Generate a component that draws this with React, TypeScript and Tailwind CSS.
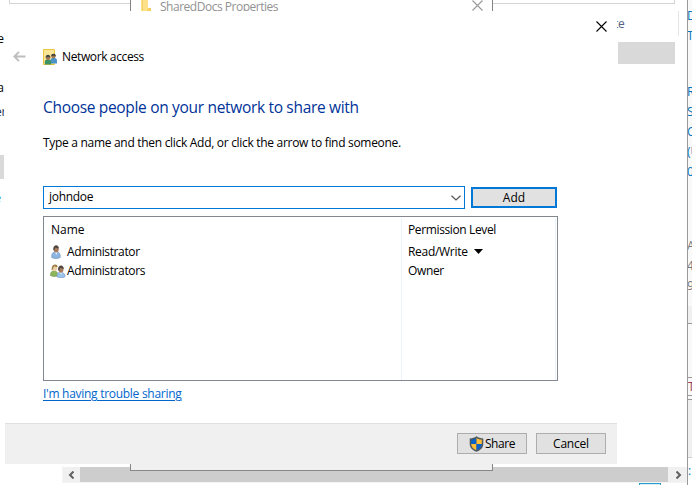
import React from "react";

function Arrow() {
  return (
    <svg width="13" height="11" viewBox="0 0 13 11" fill="none" stroke="#bdbdbd" strokeWidth="1.9">
      <path d="M12.5 5.500H1.500M6 .8L1.300 5.500 6 10.200" />
    </svg>
  );
}

function Cross({ color }: { color: string }) {
  return (
    <svg width="11" height="11" viewBox="0 0 11 11" fill="none" stroke={color} strokeWidth="1.1">
      <path d="M.5.5l10 10M10.5.5l-10 10" />
    </svg>
  );
}

function NetworkIcon() {
  return (
    <svg width="15" height="16" viewBox="0 0 15 16">
      <path d="M.5.5h11v15H.5z" fill="#fbe596" stroke="#e9c63e" />
      <path d="M7.500 14.500v-3c0-2 1-2.500 3-2.500s3.500.5 3.500 2.500v3z" fill="#4c93c9" />
      <circle cx="10.500" cy="7.300" r="2.100" fill="#9b7453" />
      <path d="M8.100 7.300c0-3.300 4.800-3.300 4.800 0-1.500-1-3-1-4.800 0z" fill="#3a3a38" />
      <path d="M1.800 15.500v-2.500c0-2 1-2.600 3-2.600s3.500.6 3.500 2.600v2.500z" fill="#3c9165" />
      <circle cx="5" cy="8.700" r="2.200" fill="#9b7453" />
      <path d="M2.500 8.700c0-4 5-4 5 0-1.500-1.200-3-1.200-5 0z" fill="#3d4542" />
    </svg>
  );
}

function UserIcon() {
  return (
    <svg width="10" height="14" viewBox="0 0 10 14">
      <path d="M.7 12.500C.3 9 1.500 7.500 3.500 7h3c2 .5 3 2 2.700 5.500-2 1.300-6.500 1.300-8.500 0z" fill="#8db5df" stroke="#6d95c2" strokeWidth=".6" />
      <path d="M4 7l1.300 3L6.500 7z" fill="#eef5fc" />
      <ellipse cx="5.200" cy="4.300" rx="2.500" ry="3.200" fill="#a87b5e" />
      <path d="M2.400 5C1.300-1 8.300-1.200 7.700 3.600 6 3 5 2.700 4.200 2.700L3.400 5.500z" fill="#51473f" />
    </svg>
  );
}

function GroupIcon() {
  return (
    <svg width="16" height="14" viewBox="0 0 16 14">
      <path d="M.5 11.500C.3 8.500 1.500 7 4 7s4 1.500 4 4.500c-2 1.200-5.500 1.200-7.500 0z" fill="#8eb45c" stroke="#65943d" strokeWidth=".6" />
      <ellipse cx="4.700" cy="4.300" rx="2.500" ry="3" fill="#ecd0a8" />
      <path d="M1.800 6.500C.3-.8 8-1 7.600 3 6 3 5 2.200 4.200 2.200 3 3 3.500 5.500 1.800 6.500z" fill="#9a7d40" />
      <path d="M7 12.800C6.800 9.700 8 8.200 10.500 8.200s4.800 1.500 4.500 4.600c-2 1.200-6 1.200-8 0z" fill="#9bc2e8" stroke="#6d95c2" strokeWidth=".6" />
      <path d="M10 8.200l1 2.500 1-2.500z" fill="#f4f9fd" />
      <ellipse cx="11" cy="5.500" rx="2.500" ry="3.100" fill="#a87b5e" />
      <path d="M8.200 6.200C7.200.2 14.300.1 13.700 5 12 4.300 11 3.900 10.200 3.900L9.200 6.700z" fill="#51473f" />
    </svg>
  );
}

function Shield() {
  return (
    <svg width="15" height="16" viewBox="0 0 15 16">
      <path d="M7.500.3C5.500 1.800 3.500 2.300.7 2.400v5.600c0 3.700 2.700 6.200 6.800 7.800 4.100-1.600 6.800-4.100 6.800-7.800V2.400C11.500 2.300 9.500 1.800 7.500.3z" fill="#505960" />
      <path d="M7.500 1.900C5.800 3 4.200 3.500 2.200 3.700V8h5.300z" fill="#0862c8" />
      <path d="M7.500 1.900c1.700 1.100 3.300 1.600 5.300 1.800V8H7.500z" fill="#ffbe35" />
      <path d="M2.200 8c0 2.900 2 4.900 5.300 6.300V8z" fill="#ffbe35" />
      <path d="M12.800 8c0 2.900-2 4.900-5.300 6.300V8z" fill="#0862c8" />
    </svg>
  );
}

function SideLine({ children }: { children: string }) {
  return <div className="-ml-[1px] h-5 whitespace-nowrap">{children}</div>;
}

function Backdrop() {
  return (
    <>
      <div className="absolute left-[9px] top-0 h-1 w-[666px] border-x border-b border-[#d4d4d4]" />
      <div className="absolute left-[130px] top-0 flex h-[471px] w-[363px] items-start border-x border-b border-[#848484] bg-white">
        <svg className="ml-[10px] shrink-0" width="10" height="11" viewBox="0 0 10 11">
          <path d="M0 0h7v11H0z" fill="#ffe18a" />
          <path d="M1 0h1v11H1z" fill="#f4cf6c" />
          <path d="M7 8h3v3H6z" fill="#f7ce62" />
        </svg>
        <span className="ml-[9px] h-4 flex-1 text-[12px] leading-[14px] tracking-[-0.48px] text-[#929292]">SharedDocs Properties</span>
        <span className="mr-[9px]"><Cross color="#999" /></span>
      </div>

      <div className="absolute left-0 top-[31px] h-[185px] w-[4px] overflow-hidden">
        <div className="flex h-[18px] justify-end">e</div>
        <div className="mt-[31px] flex h-[18px] justify-end">a</div>
        <div className="mt-[6px] flex h-[18px] justify-end text-[#152f51]"><span className="-mr-[2px] tracking-[-0.3px]">er</span></div>
        <div className="mt-[33px] h-6 bg-[#d9d9d9]" />
        <div className="mt-[11px] flex h-[18px] justify-end pr-[3px] text-[#0066b4]">e</div>
      </div>

      <div className="absolute left-[617px] top-[11px] h-[54px] w-[62px]">
        <div className="flex h-[25px] w-[62px] items-center overflow-hidden border-r border-[#e5e5e5] text-[#526280]">
          <span className="-ml-[3px] tracking-[-0.2px]">te</span>
        </div>
        <div className="mt-[6px] ml-[1px] h-[22px] w-[57px] bg-[#d9d9d9]" />
      </div>

      <div className="absolute left-[62px] top-[466px] flex h-[17px] w-[625px] border-b border-l border-[#f4f4f4] pt-[1px]">
        <div className="flex w-[17px] items-center justify-center bg-[#f0f0f0] pr-[2px]">
          <svg width="6" height="8" viewBox="0 0 6 8" fill="none" stroke="#606060" strokeWidth="2"><path d="M5.500.5L2 4l3.500 3.500" /></svg>
        </div>
        <div className="w-[588px] bg-[#cdcdcd]" />
        <div className="flex flex-1 items-center justify-center bg-[#f0f0f0] pl-[3px]">
          <svg width="6" height="8" viewBox="0 0 6 8" fill="none" stroke="#606060" strokeWidth="2"><path d="M.5.5L4 4 .5 7.500" /></svg>
        </div>
      </div>
      <div className="absolute left-[130px] top-[464px] h-[7px] w-[363px] border-x border-b border-[#888] bg-[#f0f0f0]" />
      <div className="absolute left-[639px] top-[483px] h-1 w-[22px] border border-[#2b9ed0] bg-[#ddedf5]" />

      <aside className="absolute left-[687px] top-0 flex h-[485px] w-[5px] flex-col overflow-hidden border-l border-[#999] bg-[#f9f9f9] text-[12px] leading-5 text-[#0875bd]">
        <div className="-mt-[14px]">
          <SideLine>P</SideLine>
          <SideLine>D</SideLine>
          <SideLine>T</SideLine>
        </div>
        <div className="mt-[36px]">
          <SideLine>R</SideLine>
          <SideLine>S</SideLine>
          <SideLine>C</SideLine>
          <SideLine>(U</SideLine>
          <SideLine>0</SideLine>
        </div>
        <div className="mt-[54px] text-[#777]">
          <SideLine>A</SideLine>
          <SideLine>4</SideLine>
          <SideLine>9</SideLine>
        </div>
        <div className="mt-[10px] h-[17px] shrink-0 bg-[#f0f0f0]" />
        <div className="h-[55px] shrink-0 border-y border-[#999]" />
        <div className="mt-[1px] h-[17px] shrink-0 border-b border-[#999] leading-4 text-[#963f52]">T</div>
        <div className="mt-[3px] h-[59px] shrink-0 border-y border-t-[#999] border-b-[#ccc] bg-[#f0f0f0]" />
        <div className="flex-1 bg-white pt-[3px]">:</div>
      </aside>
    </>
  );
}

function Dialog() {
  return (
    <main className="absolute left-[5px] top-[11px] flex h-[453px] w-[612px] flex-col bg-white">
      <div className="flex h-[30px] shrink-0 items-center justify-end pr-[10px]"><Cross color="#000" /></div>
      <header className="flex h-8 shrink-0 items-center pl-2">
        <span className="-mt-[2px]"><Arrow /></span>
        <span className="ml-[17px] -mt-[1px]"><NetworkIcon /></span>
        <span className="ml-1 tracking-[-0.38px]">Network access</span>
      </header>
      <section className="ml-[38px] flex w-[515px] flex-col">
        <h1 className="mt-[19px] h-[30px] text-[15.5px] leading-[30px] tracking-[-0.32px] whitespace-nowrap text-[#003399]">Choose people on your network to share with</h1>
        <p className="mt-[11px] h-5 leading-5 tracking-[-0.3px] whitespace-nowrap">Type a name and then click Add, or click the arrow to find someone.</p>
        <div className="mt-[33px] flex h-[23px] items-center">
          <div className="flex h-[23px] w-[422px] items-center justify-between border border-[#0078d7] pr-[3px] pl-[5px]">
            <span className="-mt-[1px] tracking-[-0.3px]">johndoe</span>
            <svg width="10" height="6" viewBox="0 0 10 6" fill="none" stroke="#555" strokeWidth="1.2"><path d="M.5.7L5 5 9.500.7" /></svg>
          </div>
          <button className="ml-[6px] flex h-[21px] w-[86px] items-center justify-center border-2 border-[#0078d7] bg-[#e1e1e1]">Add</button>
        </div>
        <div className="mt-[7px] grid h-[165px] grid-cols-[358px_1fr] border border-[#828790] pt-[1px]">
          <div className="border-r border-[#edf3fa]">
            <div className="flex h-[24px] items-center pl-[7px]">Name</div>
            <div className="flex h-[19px] items-center pl-[7px]"><UserIcon /><span className="ml-[6px] tracking-[-0.36px]">Administrator</span></div>
            <div className="flex h-[20px] items-center pl-[6px]"><GroupIcon /><span className="ml-[1px] tracking-[-0.36px]">Administrators</span></div>
          </div>
          <div className="mr-[1px] border-r border-[#edf3fa]">
            <div className="flex h-[24px] items-center pl-[6px] tracking-[-0.37px]">Permission Level</div>
            <div className="flex h-[19px] items-center pl-[6px]"><span className="tracking-[-0.3px]">Read/Write</span><svg className="ml-[6px]" width="9" height="5" viewBox="0 0 9 5"><path d="M0 0h9L4.500 5z" /></svg></div>
            <div className="flex h-[20px] items-center pl-[6px] tracking-[-0.35px]">Owner</div>
          </div>
        </div>
        <a className="mt-1 h-[18px] w-fit leading-[18px] tracking-[-0.28px] text-[#0066cc] underline underline-offset-2">I'm having trouble sharing</a>
      </section>
      <footer className="mt-auto flex h-[41px] shrink-0 justify-end gap-[9px] border-t border-[#dfdfdf] bg-[#f0f0f0] pt-[9px] pr-[11px]">
        <button className="flex h-[21px] w-[70px] items-center justify-center border border-[#adadad] bg-[#e1e1e1]"><Shield /><span className="ml-[1px] tracking-[-0.45px]">Share</span></button>
        <button className="flex h-[21px] w-[70px] items-center justify-center border border-[#adadad] bg-[#e1e1e1] tracking-[-0.2px]">Cancel</button>
      </footer>
    </main>
  );
}

export default function App() {
  return (
    <div className="relative h-[485px] w-[692px] overflow-hidden bg-white font-['Open_Sans','Noto_Sans',sans-serif] text-[12px] leading-4 text-black">
      <Backdrop />
      <Dialog />
    </div>
  );
}
